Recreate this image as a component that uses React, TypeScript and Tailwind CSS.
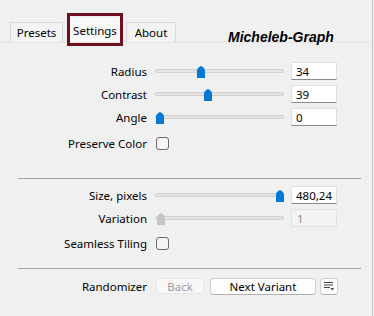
import React from 'react';

const FONT = { fontFamily: '"Noto Sans", "Open Sans", sans-serif' };

const Thumb: React.FC<{ left: number; disabled?: boolean }> = ({ left, disabled }) => (
  <svg
    width="8"
    height="12"
    viewBox="0 0 8 12"
    className="absolute top-[-4px]"
    style={{ left }}
  >
    <path d="M0 12 V4.5 Q0 2 4 0 Q8 2 8 4.5 V12 Z" fill={disabled ? '#c5c5c5' : '#0078d7'} />
  </svg>
);

const Slider: React.FC<{ pos: number; disabled?: boolean }> = ({ pos, disabled }) => (
  <div className="relative h-[4px] w-[129px] rounded-[2px] border border-[#d2d2d2] bg-[#e3e3e3]">
    <Thumb left={pos} disabled={disabled} />
  </div>
);

const ValueBox: React.FC<{ value: string; disabled?: boolean }> = ({ value, disabled }) =>
  disabled ? (
    <div className="flex h-[18px] w-[46px] items-center border border-[#e2e2e2] bg-[#f3f3f3] pl-[5px] pt-[1px] text-[#8c8c8c]">
      {value}
    </div>
  ) : (
    <div className="flex h-[18px] w-[46px] items-center border border-[#e0e0e0] border-b-[#8a8a8a] bg-white pl-[4px] pt-[1px] text-black">
      {value}
    </div>
  );

const Check: React.FC = () => (
  <div className="ml-[1px] h-[13px] w-[13px] rounded-[3px] border border-[#6b6b6b] bg-[#f6f6f6]" />
);

const SliderRow: React.FC<{ label: string; pos: number; value: string; disabled?: boolean }> = ({
  label,
  pos,
  value,
  disabled,
}) => (
  <div className="grid h-[18px] grid-cols-[147px_129px_46px] items-center">
    <div className="pt-[2px] text-right text-black">{label}</div>
    <div className="ml-[8px]">
      <Slider pos={pos} disabled={disabled} />
    </div>
    <div className="ml-[15px]">
      <ValueBox value={value} disabled={disabled} />
    </div>
  </div>
);

const CheckRow: React.FC<{ label: string }> = ({ label }) => (
  <div className="grid h-[18px] grid-cols-[147px_auto] items-center">
    <div className="pt-[1px] text-right text-black">{label}</div>
    <div className="ml-[8px]">
      <Check />
    </div>
  </div>
);

const Divider: React.FC = () => <div className="ml-[18px] h-px w-[343px] bg-[#a3a3a3]" />;

const App: React.FC = () => {
  return (
    <div className="h-[316px] w-[374px] overflow-hidden bg-[#f0f0f0] text-[11.5px] leading-[14px]" style={FONT}>
      <div className="relative h-full w-[373px] border-r border-[#c6c6c6]">
        {/* tab strip */}
        <div className="flex h-[43px] items-end border-b border-[#e6e6e6] pl-[10px]">
          <div className="flex h-[20px] w-[53px] items-center justify-center border border-b-0 border-[#dadada] bg-[#f3f3f3] pt-[1px]">
            Presets
          </div>
          <div className="ml-[4px] flex h-[24px] w-[56px] items-center justify-center bg-[#f9f9f9] pt-[1px]">
            Settings
          </div>
          <div className="ml-[3px] flex h-[20px] w-[50px] items-center justify-center border border-b-0 border-[#dadada] bg-[#f3f3f3] pt-[1px]">
            About
          </div>
          <div
            className="mb-[-4px] ml-[52px] text-[14px] font-bold italic leading-[18px]"
            style={{ fontFamily: '"Liberation Sans", Arial, sans-serif' }}
          >
            Micheleb-Graph
          </div>
        </div>
        {/* selection annotation */}
        <div className="pointer-events-none absolute left-[67px] top-[13px] h-[33px] w-[56px] border-[3px] border-[#6d1020]" />

        <div className="flex flex-col pt-[19px]">
          <div className="flex flex-col gap-[5px]">
            <SliderRow label="Radius" pos={41} value="34" />
            <SliderRow label="Contrast" pos={48} value="39" />
            <SliderRow label="Angle" pos={0} value="0" />
          </div>
          <div className="mt-[8px]">
            <CheckRow label="Preserve Color" />
          </div>
          <div className="mt-[26px]">
            <Divider />
          </div>
          <div className="mt-[7px] flex flex-col gap-[5px]">
            <SliderRow label="Size, pixels" pos={120} value="480,24" />
            <SliderRow label="Variation" pos={1} value="1" disabled />
          </div>
          <div className="mt-[7px]">
            <CheckRow label="Seamless Tiling" />
          </div>
          <div className="mt-[16px]">
            <Divider />
          </div>
          <div className="mt-[8px] flex h-[18px] items-center">
            <div className="w-[147px] pt-[2px] text-right">Randomizer</div>
            <button className="ml-[9px] flex h-[16px] w-[48px] items-center justify-center rounded-[3px] border border-[#e6e6e6] bg-[#f8f8f8] pt-[1px] text-[#9c9c9c]">
              Back
            </button>
            <button className="ml-[6px] flex h-[17px] w-[106px] items-center justify-center rounded-[4px] border border-[#d0d0d0] border-b-[#b0b0b0] bg-[#fdfdfd] pt-[1px] text-black">
              Next Variant
            </button>
            <button className="ml-[4px] flex h-[17px] w-[18px] items-center justify-center rounded-[4px] border border-[#d0d0d0] border-b-[#b0b0b0] bg-[#fdfdfd]">
              <svg width="10" height="9" viewBox="0 0 10 9">
                <rect x="0" y="0" width="9" height="1" fill="#444" />
                <rect x="0" y="2.5" width="9" height="1" fill="#444" />
                <rect x="0" y="5" width="6" height="1" fill="#444" />
                <path d="M6.5 6 H10 L8.25 8.5 Z" fill="#444" />
              </svg>
            </button>
          </div>
        </div>
      </div>
    </div>
  );
};

export default App;
